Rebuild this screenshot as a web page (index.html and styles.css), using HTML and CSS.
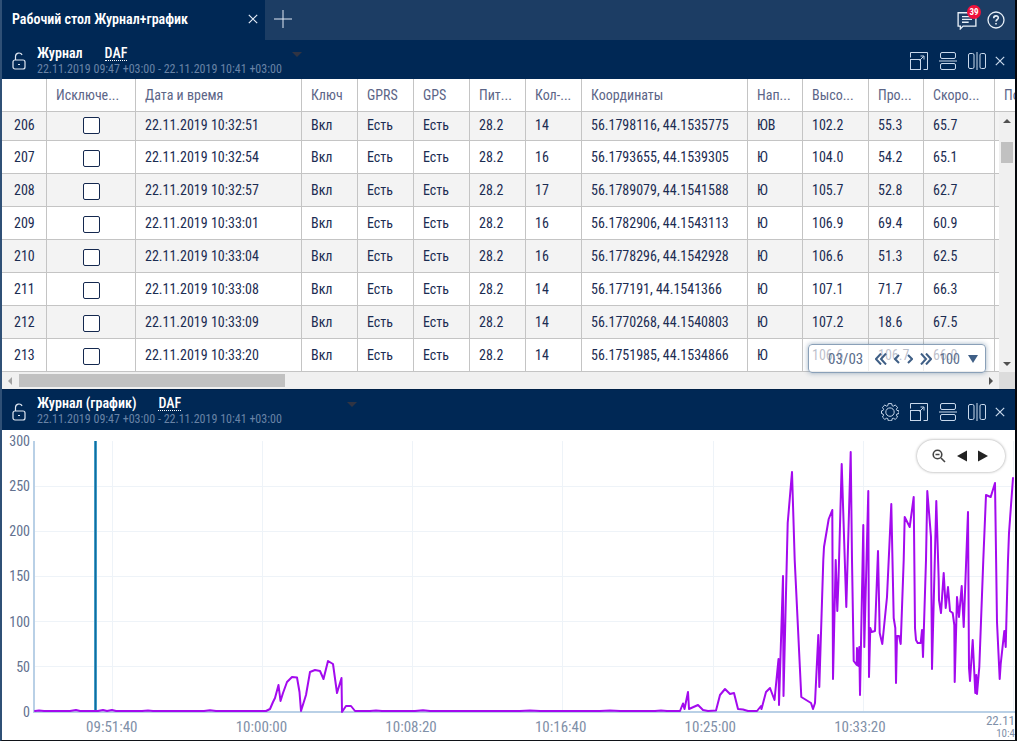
FILE: index.html
```html
<!DOCTYPE html>
<html lang="ru">
<head>
<meta charset="utf-8">
<meta name="viewport" content="width=device-width, initial-scale=1">
<title>Рабочий стол Журнал+график</title>
<link rel="stylesheet" href="styles.css">
</head>
<body>
<svg class="defs" width="0" height="0" aria-hidden="true">
  <symbol id="lock" viewBox="0 0 14 18"><path d="M3.500 8V4.500a3.500 3.500 0 0 1 6.600-1.600" /><rect x="1" y="8" width="12" height="9" rx="2"/><path d="M6 12.500h2"/></symbol>
  <symbol id="expand" viewBox="0 0 18 18"><path d="M.5 5.500V.5h17v17h-4"/><rect x=".5" y="7.500" width="10" height="10"/><path d="M9.500 8.500l4-4M10.500 4h3.500v3.500"/></symbol>
  <symbol id="rows" viewBox="0 0 18 18"><rect x="1.500" y=".5" width="15" height="6" rx="1.500"/><path d="M0 9h18"/><rect x="1.500" y="11.500" width="15" height="6" rx="1.500"/></symbol>
  <symbol id="cols" viewBox="0 0 18 18"><rect x=".5" y="1.500" width="5.500" height="15" rx="1.500"/><path d="M9 0v18"/><rect x="12" y="1.500" width="5.500" height="15" rx="1.500"/></symbol>
  <symbol id="close" viewBox="0 0 10 10"><path d="M.8.8l8.400 8.400M9.200.8L.8 9.200"/></symbol>
  <symbol id="gear" viewBox="0 0 18 18"><path d="M7.300.6h3.400l.5 2.100 1.100.5 1.900-1.200 2.400 2.400-1.200 1.900.5 1.100 2.100.5v2.600l-2.100.5-.5 1.200 1.200 1.800-2.400 2.400-1.900-1.200-1.100.5-.5 2.100H7.300l-.5-2.100-1.100-.5-1.900 1.200L1.400 14l1.200-1.800-.5-1.200-1.600-.5V7.900l1.600-.5.5-1.100-1.200-1.900L3.800 2l1.900 1.200 1.100-.5z"/><circle cx="9" cy="9.100" r="4.200"/></symbol>
</svg>
<div class="app">
  <nav class="tabs">
    <div class="tab">
      <span class="tab-name">Рабочий стол Журнал+график</span>
      <button class="icon-btn" aria-label="Закрыть вкладку"><svg class="ico tiny"><use href="#close"/></svg></button>
    </div>
    <button class="icon-btn add" aria-label="Добавить вкладку"><svg class="ico" viewBox="0 0 18 18"><path d="M9 0v18M0 9h18"/></svg></button>
    <div class="tools">
      <button class="icon-btn messages" aria-label="Сообщения"><svg class="ico" viewBox="0 0 18 18"><path d="M1 2.500h16v12H5.500L3 17v-2.500H1zM4.500 6h9M4.500 8.500h9M4.500 11h6"/></svg><span class="count">39</span></button>
      <button class="icon-btn" aria-label="Справка"><svg class="ico bright" viewBox="0 0 18 18"><circle cx="9" cy="9" r="8"/><path class="mark" d="M6.700 7.300c0-3.200 4.800-3.100 4.600-.3-.1 1.600-2.300 1.500-2.300 3.500M9 12v1.600"/></svg></button>
    </div>
  </nav>

  <section class="panel">
    <header class="bar">
      <button class="icon-btn" aria-label="Закрепить"><svg class="ico lock"><use href="#lock"/></svg></button>
      <div class="heading">
        <div class="line"><h2>Журнал</h2><a href="#" class="unit">DAF</a></div>
        <div class="period">22.11.2019 09:47 +03:00 - 22.11.2019 10:41 +03:00</div>
      </div>
      <span class="caret near"></span>
      <div class="actions">
        <button class="icon-btn" aria-label="Развернуть"><svg class="ico"><use href="#expand"/></svg></button>
        <button class="icon-btn" aria-label="Разделить по горизонтали"><svg class="ico"><use href="#rows"/></svg></button>
        <button class="icon-btn" aria-label="Разделить по вертикали"><svg class="ico"><use href="#cols"/></svg></button>
        <button class="icon-btn" aria-label="Закрыть"><svg class="ico tiny"><use href="#close"/></svg></button>
      </div>
    </header>
    <div class="grid">
      <div class="view">
        <table>
          <colgroup><col class="c-num"><col class="c-ex"><col class="c-wide"><col class="c-s"><col class="c-s"><col class="c-s"><col class="c-s"><col class="c-s"><col class="c-wide"><col class="c-m"><col class="c-l"><col class="c-m"><col class="c-xl"><col class="c-l"></colgroup>
          <thead><tr><th></th><th>Исключе...</th><th>Дата и время</th><th>Ключ</th><th>GPRS</th><th>GPS</th><th>Пит...</th><th>Кол-...</th><th>Координаты</th><th>Нап...</th><th>Высо...</th><th>Про...</th><th>Скоро...</th><th>По...</th></tr></thead>
          <tbody id="rows-body"></tbody>
        </table>
      </div>
      <div class="vbar"><span class="arrow up"></span><span class="thumb"></span><span class="arrow down"></span></div>
      <div class="hbar"><span class="arrow left"></span><span class="thumb"></span><span class="arrow right"></span></div>
      <div class="corner"></div>
      <div class="pager">
        <span class="page">03/03</span>
        <button class="icon-btn" aria-label="Первая"><svg class="nav" viewBox="0 0 12 12"><path d="M6 .5L1 6l5 5.500M11 .5L6 6l5 5.500"/></svg></button>
        <button class="icon-btn" aria-label="Назад"><svg class="nav slim" viewBox="0 0 6 12"><path d="M5 2L1 6l4 4"/></svg></button>
        <button class="icon-btn" aria-label="Вперёд"><svg class="nav slim" viewBox="0 0 6 12"><path d="M1 2l4 4-4 4"/></svg></button>
        <button class="icon-btn" aria-label="Последняя"><svg class="nav" viewBox="0 0 12 12"><path d="M1 .5L6 6l-5 5.500M6 .5L11 6l-5 5.500"/></svg></button>
        <button class="icon-btn size">100<span class="caret blue"></span></button>
      </div>
    </div>
  </section>

  <section class="panel chart-panel">
    <header class="bar second">
      <button class="icon-btn" aria-label="Закрепить"><svg class="ico lock"><use href="#lock"/></svg></button>
      <div class="heading">
        <div class="line"><h2>Журнал (график)</h2><a href="#" class="unit">DAF</a></div>
        <div class="period">22.11.2019 09:47 +03:00 - 22.11.2019 10:41 +03:00</div>
      </div>
      <span class="caret far"></span>
      <div class="actions">
        <button class="icon-btn" aria-label="Настройки"><svg class="ico"><use href="#gear"/></svg></button>
        <button class="icon-btn" aria-label="Развернуть"><svg class="ico"><use href="#expand"/></svg></button>
        <button class="icon-btn" aria-label="Разделить по горизонтали"><svg class="ico"><use href="#rows"/></svg></button>
        <button class="icon-btn" aria-label="Разделить по вертикали"><svg class="ico"><use href="#cols"/></svg></button>
        <button class="icon-btn" aria-label="Закрыть"><svg class="ico tiny"><use href="#close"/></svg></button>
      </div>
    </header>
    <div class="chart">
      <div class="y-axis"><span>300</span><span>250</span><span>200</span><span>150</span><span>100</span><span>50</span><span>0</span></div>
      <svg class="plot" viewBox="34 441 981 272" preserveAspectRatio="none" role="img" aria-label="График">
        <path class="rule" d="M34 486.500H1015M34 531.500H1015M34 576.500H1015M34 621.500H1015M34 666.500H1015M112.500 441V711M262.500 441V711M412.500 441V711M562.500 441V711M713.500 441V711M863.500 441V711M1013.500 441V711"/>
        <path class="axis" d="M34 441V712H1015"/>
        <path class="cursor" d="M95.500 441V711"/>
        <path class="cursor-core" d="M95.500 441V711"/>
        <polyline class="series" points="35,711 39,710.500 44,711 70,711 76,710 80,711 98,711 103,710 107,711 112,710 116,711 142,711 148,710.500 153,711 204,711 210,710.300 216,711 266,711 270,709 273,702 275,698 278.500,685 280.500,701 283,693 287,682 292,677 297,677.500 299.500,692 301,711 306,695 310,672 315,670 320,671 323.500,679 328,661 333,664 337,693 341.500,678 342,712 346,706 351,706 355,711 370,711 376,710.500 382,711 415,711 423,710.300 430,711 520,711 530,710.500 540,711 600,711 610,710.500 620,711 655,711 661,710.500 667,711 680,711 683,703.500 684.500,709 688,692 689,709 698,705 703,710 708,711 716,710.500 720,695 725,689 730,694 734,693 738,709 743,709.500 748,711 757,711 761,706 761.500,709 766,692 770,688 774.500,700 778.500,659 779,705 783,576 783.500,696 787.700,523 792,472 794.700,560 801.300,697 811,703 813,709 815,703 818.300,635 819.300,687 823.300,560 824,547 828.700,519 832.300,510 833,679 835.700,560 837.300,611 838.500,580 841.700,464 846.300,607 850.700,452 852,560 853.700,661 856.700,665 857,648 858.300,666 859.300,647 860,695 863.300,525 864.300,647 868.300,491 869,677 870.300,628 871.700,632 875,631 878,551 879.700,633 882.300,644 887,597 891.300,504 893.700,618 895.300,628 896,683 897,636 899,636 900.700,644 903.700,560 904.700,517 909.700,527 913.700,497 915,628 916,640 917.700,643 920.700,643 922,630 923,657 926,560 927.300,491 931,537 932,669 936.300,501 938.700,580 939,600 941,613 943.700,573 945.700,608 948,587 950,611 952.700,613 954.300,625 954.700,682 957,597 959,617 961.700,586 963.700,627 968,512 969,668 970,681 972.700,640 975.300,693 976.300,675 977,694 979.300,667 983.300,560 986,495 990.700,497 995,483 997,622 999.700,679 1000.700,664 1004.300,631 1005.700,647 1008,560 1009,533 1013,478"/>
      </svg>
      <div class="x-axis"><span>09:51:40</span><span>10:00:00</span><span>10:08:20</span><span>10:16:40</span><span>10:25:00</span><span>10:33:20</span><span class="last">22.11<small>10:4</small></span></div>
      <div class="zoom">
        <button class="icon-btn" aria-label="Уменьшить"><svg class="glass" viewBox="0 0 14 14"><circle cx="5.500" cy="5.500" r="4.300"/><path d="M3.500 5.500h4M9 9l4 4"/></svg></button>
        <button class="icon-btn" aria-label="Влево"><svg class="tri" viewBox="0 0 10 12"><path d="M10 .5v11L0 6z"/></svg></button>
        <button class="icon-btn" aria-label="Вправо"><svg class="tri" viewBox="0 0 10 12"><path d="M0 .5v11L10 6z"/></svg></button>
      </div>
    </div>
  </section>
</div>
<script src="rows.js"></script>
</body>
</html>
```
FILE: rows.js
```js
const rows = [
  ["206", "22.11.2019 10:32:51", "14", "56.1798116, 44.1535775", "ЮВ", "102.2", "55.3", "65.7"],
  ["207", "22.11.2019 10:32:54", "16", "56.1793655, 44.1539305", "Ю", "104.0", "54.2", "65.1"],
  ["208", "22.11.2019 10:32:57", "17", "56.1789079, 44.1541588", "Ю", "105.7", "52.8", "62.7"],
  ["209", "22.11.2019 10:33:01", "16", "56.1782906, 44.1543113", "Ю", "106.9", "69.4", "60.9"],
  ["210", "22.11.2019 10:33:04", "16", "56.1778296, 44.1542928", "Ю", "106.6", "51.3", "62.5"],
  ["211", "22.11.2019 10:33:08", "14", "56.177191, 44.1541366", "Ю", "107.1", "71.7", "66.3"],
  ["212", "22.11.2019 10:33:09", "14", "56.1770268, 44.1540803", "Ю", "107.2", "18.6", "67.5"],
  ["213", "22.11.2019 10:33:20", "14", "56.1751985, 44.1534866", "Ю", "106.6", "106.7", "66.0"]
];
document.getElementById("rows-body").innerHTML = rows.map(([n, time, sats, pos, dir, alt, dist, speed]) => {
  const check = `<input type="checkbox" aria-label="Исключить ${n}">`;
  const cells = [n, check, time, "Вкл", "Есть", "Есть", "28.2", sats, pos, dir, alt, dist, speed, ""];
  return "<tr>" + cells.map(c => `<td>${c}</td>`).join("") + "</tr>";
}).join("");
```
FILE: styles.css
```css
* { box-sizing: border-box; }
body { margin: 0; background: #fff; color: #1b2c52; font-family: "Roboto Condensed", Roboto, sans-serif; font-size: 14px; }
.defs { position: absolute; }
.app { min-height: 100vh; display: flex; flex-direction: column; border-left: 2px solid #2f5076; border-right: 2px solid #05070c; border-bottom: 1px solid #101318; overflow: hidden; }
.icon-btn { display: flex; align-items: center; justify-content: center; padding: 0; border: 0; background: none; color: inherit; font: inherit; cursor: pointer; }
.ico { display: block; width: 18px; height: 18px; fill: none; stroke: #c9d9ec; stroke-width: 1; }
.ico.tiny { width: 10px; height: 10px; stroke: #e4ecf6; stroke-width: 1.2; }
.ico.lock { width: 14px; height: 18px; stroke: #dfe8f3; stroke-width: 1.2; }
.ico.bright { stroke: #e8f0f8; stroke-width: 1.3; }
.mark { stroke-width: 1.6; }

.tabs { display: flex; height: 40px; background: #1c3d64; color: #fff; }
.tab { display: flex; align-items: center; justify-content: space-between; width: 263px; padding: 0 7px 3px 10px; background: #002855; }
.tab-name { font-weight: 600; }
.add { padding: 0 9px 3px; }
.add .ico { stroke: #e0e9f4; }
.tools { display: flex; align-items: center; gap: 10px; margin-left: auto; padding-right: 10px; }
.messages { position: relative; }
.messages .ico { width: 20px; height: 20px; stroke: #e8f0f8; stroke-width: 1.2; }
.count { position: absolute; left: 10px; top: -5px; width: 14px; height: 14px; border-radius: 7px; background: #f0123c; color: #fff; font-size: 9px; font-weight: 700; line-height: 14px; text-align: center; }

.bar { display: flex; align-items: center; height: 39px; padding: 0 10px; background: #002855; color: #fff; }
.bar.second { height: 40px; }
.bar .lock { margin-top: 3px; }
.heading { margin-left: 11px; padding-top: 1px; }
.line { display: flex; align-items: baseline; gap: 22px; line-height: 17px; }
h2 { margin: 0; font-size: 14px; font-weight: 600; }
.unit { color: #fff; font-weight: 500; line-height: 14px; text-decoration: none; border-bottom: 1px dotted #fff; }
.period { color: #6883a6; font-size: 12px; line-height: 14px; }
.caret { width: 0; height: 0; border: 5px solid transparent; border-bottom: 0; border-top: 5px solid #303443; }
.near { margin: 0 0 11px 10px; }
.far { margin: 0 0 11px 65px; }
.actions { display: flex; align-items: center; gap: 11px; margin-left: auto; padding-top: 3px; }
.actions .icon-btn:last-child { margin-left: -2px; }
.actions .tiny { stroke: #c9d9ec; }

.grid { position: relative; display: grid; grid-template: 33px auto 17px / minmax(0, 1fr) 16px; border-bottom: 1px solid #002047; }
.view { grid-area: 1 / 1 / 3 / 3; overflow: hidden; }
table { width: 1058px; table-layout: fixed; border-collapse: separate; border-spacing: 0; }
.c-num { width: 45px; }
.c-ex { width: 89px; }
.c-wide { width: 166px; }
.c-s { width: 56px; }
.c-m { width: 55px; }
.c-l { width: 66px; }
.c-xl { width: 71px; }
th, td { height: 33px; padding: 0 9px; border-right: 1px solid #c4c4c4; border-bottom: 1px solid #c4c4c4; text-align: left; white-space: nowrap; overflow: hidden; }
th { color: #5c6587; font-weight: 400; }
td:first-child { padding-left: 12px; }
td:nth-child(2) { padding: 2px 0 0; text-align: center; }
tbody tr:nth-child(odd) { background: #f3f3f3; }
tbody tr:first-child td { height: 29px; padding-bottom: 3px; }
tbody tr:first-child td:nth-child(2) { padding: 0 0 2px; }
input[type="checkbox"] { appearance: none; display: block; width: 17px; height: 17px; margin: 0 auto; border: 1px solid #14284f; border-radius: 2px; background: #fff; }
.vbar { grid-area: 2 / 2; display: flex; flex-direction: column; align-items: center; padding: 7px 0 6px; background: #f0f0f0; }
.vbar .thumb { width: 12px; height: 21px; margin-top: 19px; background: #c1c1c1; }
.hbar { grid-area: 3 / 1; display: flex; align-items: center; padding: 0 6px; background: #f0f0f0; }
.hbar .thumb { width: 27%; height: 13px; margin-left: 7px; background: #c1c1c1; }
.corner { grid-area: 3 / 2; background: #dcdcdc; }
.arrow { width: 0; height: 0; border: 4px solid transparent; }
.up { border-top: 0; border-bottom-color: #505050; }
.down { margin-top: auto; border-bottom: 0; border-top-color: #505050; }
.left { border-left: 0; border-right-color: #a3a3a3; }
.right { margin-left: auto; border-right: 0; border-left-color: #505050; }
.pager { position: absolute; right: 29px; bottom: 16px; display: flex; align-items: center; gap: 7px; width: 178px; height: 29px; padding: 0 10px 0 19px; border: 1px solid #8aa0b8; border-radius: 4px; background: rgba(255, 255, 255, .7); box-shadow: 0 0 5px rgba(40, 80, 120, .45); color: #5a6e8c; }
.page { margin-right: 5px; font-size: 15px; }
.nav { width: 12px; height: 12px; fill: none; stroke: #3f5f86; stroke-width: 2; }
.nav.slim { width: 6px; }
.size { gap: 8px; }
.blue { border-width: 5px; border-bottom: 0; border-top: 8px solid #3f5f86; }

.chart-panel { flex: 1; display: flex; flex-direction: column; }
.chart { position: relative; flex: 1; display: grid; grid-template: minmax(200px, 1fr) 27px / 32px minmax(0, 1fr); padding-top: 11px; }
.y-axis { display: flex; flex-direction: column; justify-content: space-between; margin: -7px 4px -6px 0; color: #62718f; line-height: 14px; text-align: right; }
.plot { width: 100%; height: 100%; min-height: 0; overflow: visible; contain: size; }
.plot path, .plot polyline { fill: none; vector-effect: non-scaling-stroke; }
.rule { stroke: #eef3f8; }
.axis { stroke: #b9d0e6; stroke-width: 2; }
.cursor { stroke: #3f9cc8; stroke-width: 3; }
.cursor-core { stroke: #156b9b; stroke-width: 1; }
.series { stroke: #a30aee; stroke-width: 2; stroke-linejoin: round; stroke-linecap: round; }
.x-axis { grid-column: 2; display: grid; grid-template-columns: repeat(6, 15.3%) minmax(0, 1fr); margin-left: 3px; color: #7f90a8; font-size: 15px; line-height: 16px; padding-top: 6px; }
.x-axis span { text-align: center; }
.x-axis .last { margin-top: -5px; font-size: 13px; line-height: 14px; text-align: right; }
.last small { display: block; font-size: 11px; line-height: 12px; }
.zoom { position: absolute; top: 10px; right: 10px; display: flex; align-items: center; gap: 11px; height: 32px; padding: 0 17px 0 15px; border-radius: 16px; background: #fff; box-shadow: 0 0 3px rgba(0, 0, 0, .4); }
.glass { width: 14px; height: 14px; fill: none; stroke: #444; stroke-width: 1.6; }
.tri { width: 10px; height: 12px; fill: #222; }
```
